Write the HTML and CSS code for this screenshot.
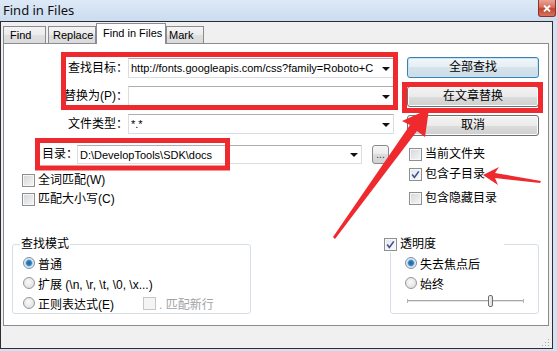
FILE: index.html
```html
<!DOCTYPE html>
<html lang="zh-CN">
<head>
  <meta charset="utf-8">
  <title>Find in Files</title>
  <link rel="stylesheet" href="styles.css">
</head>
<body>
  <div class="titlebar">
    <span class="title">Find in Files</span>
    <span class="close">
      <svg width="8" height="7" viewBox="0 0 8 7"><path d="M1 0.5 L7 6.5 M7 0.5 L1 6.5" stroke="#fff" stroke-width="1.8"/></svg>
    </span>
  </div>

  <div class="window">
    <div class="tabs">
      <div class="tab t-find">Find</div>
      <div class="tab t-replace">Replace</div>
      <div class="tab t-files active">Find in Files</div>
      <div class="tab t-mark">Mark</div>
    </div>

    <div class="panel">
      <div class="top">
        <div class="form">
          <div class="fields">
            <label>查找目标：</label>
            <div class="combo"><span class="val">http://fonts.googleapis.com/css?family=Roboto+C</span><i class="arrow"></i></div>
            <label>替换为(P)：</label>
            <div class="combo"><span class="val"></span><i class="arrow"></i></div>
            <label>文件类型：</label>
            <div class="combo"><span class="val">*.*</span><i class="arrow"></i></div>
          </div>

          <div class="dir">
            <label>目录：</label>
            <div class="combo"><span class="val">D:\DevelopTools\SDK\docs</span><i class="arrow"></i></div>
            <div class="browse">...</div>
          </div>

          <div class="form-checks">
            <div class="check"><span class="box"></span><span>全词匹配(W)</span></div>
            <div class="check"><span class="box"></span><span>匹配大小写(C)</span></div>
          </div>
        </div>

        <div class="side">
          <div class="buttons">
            <div class="btn default">全部查找</div>
            <div class="btn">在文章替换</div>
            <div class="btn">取消</div>
          </div>
          <div class="side-checks">
            <div class="check"><span class="box"></span><span>当前文件夹</span></div>
            <div class="check"><span class="box on"><svg width="11" height="11" viewBox="0 0 11 11"><path d="M2.2 5.6 L4.4 8.4 L8.8 2.4" fill="none" stroke="#3f4f94" stroke-width="1.6"/></svg></span><span>包含子目录</span></div>
            <div class="check hidden-dirs"><span class="box"></span><span>包含隐藏目录</span></div>
          </div>
        </div>
      </div>

      <div class="bottom">
        <fieldset class="group mode">
          <legend>查找模式</legend>
          <div class="opt"><span class="radio on"></span><span>普通</span></div>
          <div class="opt"><span class="radio"></span><span>扩展 (\n, \r, \t, \0, \x...)</span></div>
          <div class="opt">
            <span class="regex"><span class="radio"></span><span>正则表达式(E)</span></span>
            <span class="box disabled"></span><span class="muted">. 匹配新行</span>
          </div>
        </fieldset>

        <fieldset class="group opacity">
          <legend><span class="box on"><svg width="11" height="11" viewBox="0 0 11 11"><path d="M2.2 5.6 L4.4 8.4 L8.8 2.4" fill="none" stroke="#3f4f94" stroke-width="1.6"/></svg></span><span>透明度</span></legend>
          <div class="opt"><span class="radio on"></span><span>失去焦点后</span></div>
          <div class="opt"><span class="radio"></span><span>始终</span></div>
          <div class="slider">
            <i class="tick"></i><i class="track left"></i><i class="thumb"></i><i class="track right"></i><i class="tick"></i>
          </div>
        </fieldset>
      </div>
    </div>

    <div class="footer">
      <svg class="grip" width="9" height="9" viewBox="0 0 9 9">
        <rect x="7" y="1" width="1" height="1" fill="#a7a7a7"/>
        <rect x="4" y="4" width="1" height="1" fill="#a7a7a7"/>
        <rect x="7" y="4" width="1" height="1" fill="#a7a7a7"/>
        <rect x="1" y="7" width="1" height="1" fill="#a7a7a7"/>
        <rect x="4" y="7" width="1" height="1" fill="#a7a7a7"/>
        <rect x="7" y="7" width="1" height="1" fill="#a7a7a7"/>
      </svg>
    </div>
  </div>

  <!-- red annotations drawn over the dialog -->
  <svg class="marks" width="557" height="351" viewBox="0 0 557 351">
    <rect x="63.5" y="54.5" width="332" height="53" fill="none" stroke="#ee2a2e" stroke-width="5"/>
    <rect x="37.5" y="140.5" width="190" height="27.5" fill="none" stroke="#ee2a2e" stroke-width="5"/>
    <rect x="404.5" y="84.5" width="136" height="26" fill="none" stroke="#ee2a2e" stroke-width="5"/>
    <polygon points="429,109 425,137 417,131 335,239 333,237 410,125 402,121" fill="#ee2a2e"/>
    <polygon points="483,175 499,167 495,173 541,181 540,183 495,178 498,185" fill="#ee2a2e"/>
  </svg>
</body>
</html>
```

FILE: styles.css
```css
html, body {
  margin: 0;
  padding: 0;
}
body {
  width: 557px;
  height: 351px;
  overflow: hidden;
  position: relative;
  background: #d2e1f3;
  font-family: "Liberation Sans", "Noto Sans CJK SC", sans-serif;
  font-size: 12px;
  color: #000;
}

/* title bar */
.titlebar {
  height: 21px;
  display: flex;
  align-items: flex-start;
  background: linear-gradient(#dde9f6, #cbdcf1);
}
.title {
  font-family: "Noto Sans", sans-serif;
  font-size: 13px;
  line-height: 20px;
  padding-left: 3px;
  color: #111;
}
.close {
  margin-left: auto;
  margin-right: 1px;
  width: 18px;
  height: 17px;
  box-sizing: border-box;
  border: 1px solid #8c3427;
  border-top: 0;
  border-radius: 0 0 3px 3px;
  background: linear-gradient(#eaa395, #d8705d 45%, #c34430 55%, #d5735f);
  display: flex;
  align-items: center;
  justify-content: center;
}

/* dialog */
.window {
  width: 551px;
  height: 326px;
  border: 1px solid #2e2e2e;
  background: #f0f0f0;
  display: flex;
  flex-direction: column;
}

.tabs {
  display: flex;
  align-items: flex-end;
  height: 21px;
  padding-left: 2px;
}
.tab {
  box-sizing: border-box;
  height: 17px;
  border: 1px solid #898c95;
  border-bottom: 0;
  background: linear-gradient(#f4f4f4, #ebebeb 50%, #dfdfdf 50%, #dadada);
  font-size: 11px;
  line-height: 16px;
  padding-left: 6px;
  white-space: nowrap;
}
.tab.active {
  height: 21px;
  margin-bottom: -1px;
  background: #fff;
  line-height: 18px;
  position: relative;
  z-index: 1;
}
.t-find { width: 43px; margin-right: 2px; }
.t-replace { width: 48px; padding-left: 4px; }
.t-files { width: 70px; }
.t-mark { width: 38px; padding-left: 2px; }

.panel {
  margin-left: 2px;
  width: 544px;
  height: 281px;
  border: 1px solid #898c95;
  background: #fff;
}

.footer {
  flex: 1;
  display: flex;
  justify-content: flex-end;
  align-items: flex-end;
}
.grip {
  margin: 0 2px 1px 0;
}

/* top area */
.top {
  display: flex;
}
.form {
  width: 390px;
}
.fields {
  display: grid;
  grid-template-columns: 124px 266px;
  row-gap: 8px;
  margin-top: 14px;
}
.fields label {
  text-align: right;
  line-height: 20px;
  white-space: nowrap;
}
.combo {
  height: 20px;
  box-sizing: border-box;
  border: 1px solid #dadde3;
  border-top-color: #abadb3;
  background: #fff;
  display: flex;
  align-items: center;
  font-size: 11px;
  padding-left: 2px;
}
.combo .val {
  flex: 1;
  white-space: nowrap;
  overflow: hidden;
}
.arrow {
  width: 0;
  height: 0;
  border-top: 4px solid #111;
  border-left: 4px solid transparent;
  border-right: 4px solid transparent;
  margin: 1px 3px 0 4px;
}

.dir {
  display: flex;
  align-items: center;
  margin-top: 11px;
  padding-left: 38px;
}
.dir label {
  width: 35px;
  white-space: nowrap;
  line-height: 19px;
}
.dir .combo {
  width: 285px;
  height: 19px;
}
.browse {
  margin-left: 10px;
  width: 17px;
  height: 19px;
  box-sizing: border-box;
  border: 1px solid #8a8a8a;
  border-radius: 3px;
  background: linear-gradient(#f6f6f6, #ebebeb 50%, #dddddd 50%, #d2d2d2);
  font-size: 10px;
  line-height: 18px;
  text-align: center;
  color: #333;
}

.form-checks {
  margin: 10px 0 0 18px;
  display: flex;
  flex-direction: column;
  gap: 6px;
}
.check {
  display: flex;
  align-items: center;
  height: 13px;
  line-height: 13px;
  white-space: nowrap;
}
.check .box {
  margin-right: 3px;
}
.box {
  display: inline-flex;
  align-items: center;
  justify-content: center;
  flex: none;
  width: 13px;
  height: 13px;
  box-sizing: border-box;
  border: 1px solid #8e8f8f;
  background: linear-gradient(135deg, #d3d6da, #f6f6f6);
  box-shadow: inset 0 0 0 1px #f7f7f7;
}
.box.on {
  background: linear-gradient(135deg, #e4e6ea, #fbfbfb);
}
.box.disabled {
  border-color: #c6c6c6;
  background: #f4f4f4;
  box-shadow: none;
}

.side {
  margin-left: 13px;
  width: 132px;
}
.buttons {
  margin-top: 13px;
  display: flex;
  flex-direction: column;
  gap: 8px;
}
.btn {
  height: 21px;
  box-sizing: border-box;
  border: 1px solid #707070;
  border-radius: 3px;
  background: linear-gradient(#f3f3f3, #ebebeb 50%, #dddddd 50%, #cfcfcf);
  box-shadow: inset 0 0 0 1px #fcfcfc;
  text-align: center;
  line-height: 19px;
}
.btn.default {
  border-color: #3c7fb1;
  background: linear-gradient(#f2f7fa, #e5eef4 50%, #d6e3ec 50%, #ccdbe6);
  box-shadow: inset 0 0 0 1px #c4e5f6;
}
.side-checks {
  margin: 12px 0 0 2px;
  display: flex;
  flex-direction: column;
  gap: 7px;
}
.side-checks .hidden-dirs {
  margin-top: 4px;
}

/* bottom groups */
.bottom {
  display: flex;
  margin-top: 30px;
}
.group {
  margin: 0;
  padding: 1px 0 0 10px;
  box-sizing: border-box;
  border: 1px solid #d5dfe5;
  border-radius: 3px;
}
.group legend {
  padding: 0 1px;
  line-height: 16px;
  background: #fff;
}
.mode {
  margin-left: 8px;
  width: 239px;
}
.mode legend {
  margin-left: -3px;
}
.opacity {
  margin-left: 139px;
  width: 149px;
  padding-left: 14px;
  padding-bottom: 4px;
}
.opacity legend {
  margin-left: -21px;
  width: 120px;
  box-sizing: border-box;
  padding: 0;
  display: flex;
  align-items: center;
}
.opacity legend .box {
  margin-right: 3px;
}

.opt {
  display: flex;
  align-items: center;
  height: 20px;
  white-space: nowrap;
}
.regex {
  display: flex;
  align-items: center;
  width: 120px;
}
.radio {
  flex: none;
  width: 12px;
  height: 12px;
  margin-right: 3px;
  box-sizing: border-box;
  border: 1px solid #979797;
  border-radius: 50%;
  background: radial-gradient(circle at 45% 40%, #fbfbfb, #d6d8db);
}
.radio.on {
  border-color: #7f8ea0;
  background: radial-gradient(circle, #1f5f94 0, #3d82bd 2.5px, #9fd0ef 3.5px, #e6eef5 4.2px, #d8dde3);
}
.muted {
  color: #a3a3a3;
  margin-left: 3px;
}

.slider {
  display: flex;
  align-items: center;
  height: 16px;
  margin-left: 2px;
  width: 117px;
}
.track {
  height: 1px;
  background: #a9a9a9;
  border-bottom: 1px solid #e3e3e3;
}
.track.left {
  width: 80px;
}
.track.right {
  flex: 1;
}
.tick {
  width: 1px;
  height: 4px;
  background: #b5b5b5;
}
.thumb {
  width: 5px;
  height: 12px;
  box-sizing: border-box;
  border: 1px solid #6f6f6f;
  border-radius: 2px;
  background: linear-gradient(90deg, #f5f5f5, #dcdcdc);
}

.marks {
  position: absolute;
  left: 0;
  top: 0;
  pointer-events: none;
}
```
